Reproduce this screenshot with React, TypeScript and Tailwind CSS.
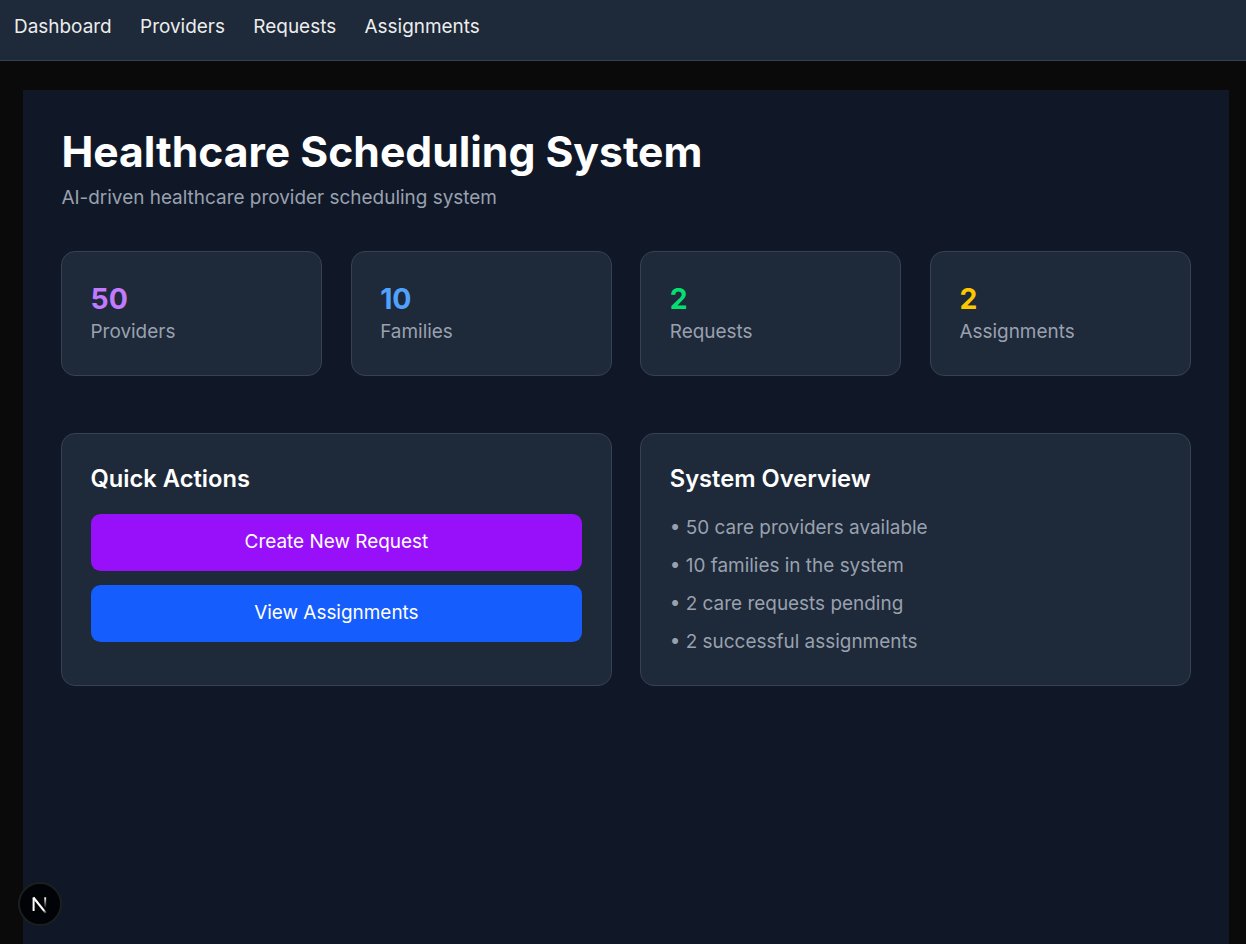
const links = ["Dashboard", "Providers", "Requests", "Assignments"];

const stats = [
  { value: 50, label: "Providers", color: "text-[#c27aff]" },
  { value: 10, label: "Families", color: "text-[#51a2ff]" },
  { value: 2, label: "Requests", color: "text-[#05df72]" },
  { value: 2, label: "Assignments", color: "text-[#fdc700]" },
];

const overview = [
  "50 care providers available",
  "10 families in the system",
  "2 care requests pending",
  "2 successful assignments",
];

const card = "rounded-[14px] border border-[#364153] bg-[#1e2939] px-[28.5px] py-7";

export default function App() {
  return (
    <div className="flex h-screen flex-col overflow-hidden bg-[#0a0a0a] font-['Inter',sans-serif] text-[18.96px] leading-[28.5px] text-[#ededed]">
      <nav className="flex h-[61px] shrink-0 gap-[28.4px] border-b border-[#364153] bg-[#1e2939] px-[14px] pt-[13px]">
        {links.map((l) => (
          <a key={l} href="#">{l}</a>
        ))}
      </nav>

      <main className="mt-[29px] mr-[17px] ml-[23px] grow bg-[#101828] p-[38px]">
        <h1 className="pl-[0.4px] text-[42.65px] leading-[47.5px] font-bold text-white">Healthcare Scheduling System</h1>
        <p className="mt-2 pl-[0.4px] text-[#99a1af]">AI-driven healthcare provider scheduling system</p>

        <section className="mt-[39px] grid grid-cols-4 gap-[28.5px]">
          {stats.map((s) => (
            <div key={s.label} className={`${card} h-[125px]`}>
              <div className={`text-[28.4px] leading-[38px] font-bold ${s.color}`}>{s.value}</div>
              <div className="text-[#99a1af]">{s.label}</div>
            </div>
          ))}
        </section>

        <section className="mt-[57px] grid grid-cols-2 gap-[28.5px]">
          <div className={`${card} h-[253px]`}>
            <h2 className="mb-[19px] text-[23.7px] leading-[33px] font-semibold text-white">Quick Actions</h2>
            <div className="flex flex-col gap-3.5">
              <button className="h-[57px] rounded-[9.5px] bg-[#9810fa] text-white">Create New Request</button>
              <button className="h-[57px] rounded-[9.5px] bg-[#155dfc] text-white">View Assignments</button>
            </div>
          </div>
          <div className={`${card} h-[253px]`}>
            <h2 className="mb-[19px] text-[23.7px] leading-[33px] font-semibold text-white">System Overview</h2>
            <ul className="flex flex-col gap-[9.5px] text-[#99a1af]">
              {overview.map((o) => (
                <li key={o}>• {o}</li>
              ))}
            </ul>
          </div>
        </section>
      </main>

      <div className="fixed bottom-[18px] left-[18px] flex size-[44px] items-center justify-center rounded-full border-2 border-[#1d1e20] bg-[#020307]">
        <svg className="size-10 shrink-0" viewBox="0 0 40 40" fill="none">
          <defs>
            <linearGradient id="diagonal" x1="20" y1="20" x2="27" y2="29" gradientUnits="userSpaceOnUse">
              <stop stopColor="#fff" />
              <stop offset="0.6" stopColor="#fff" />
              <stop offset="1" stopColor="#fff" stopOpacity="0" />
            </linearGradient>
            <linearGradient id="stem" x1="25" y1="13" x2="25" y2="24" gradientUnits="userSpaceOnUse">
              <stop stopColor="#fff" />
              <stop offset="1" stopColor="#fff" stopOpacity="0" />
            </linearGradient>
          </defs>
          <path d="M13.6 27V13.5" stroke="#fff" strokeWidth="2" />
          <path d="M13.4 13.5L26 29.2" stroke="url(#diagonal)" strokeWidth="2.1" />
          <path d="M25.2 13.3V24" stroke="url(#stem)" strokeWidth="1.9" />
        </svg>
      </div>
    </div>
  );
}
